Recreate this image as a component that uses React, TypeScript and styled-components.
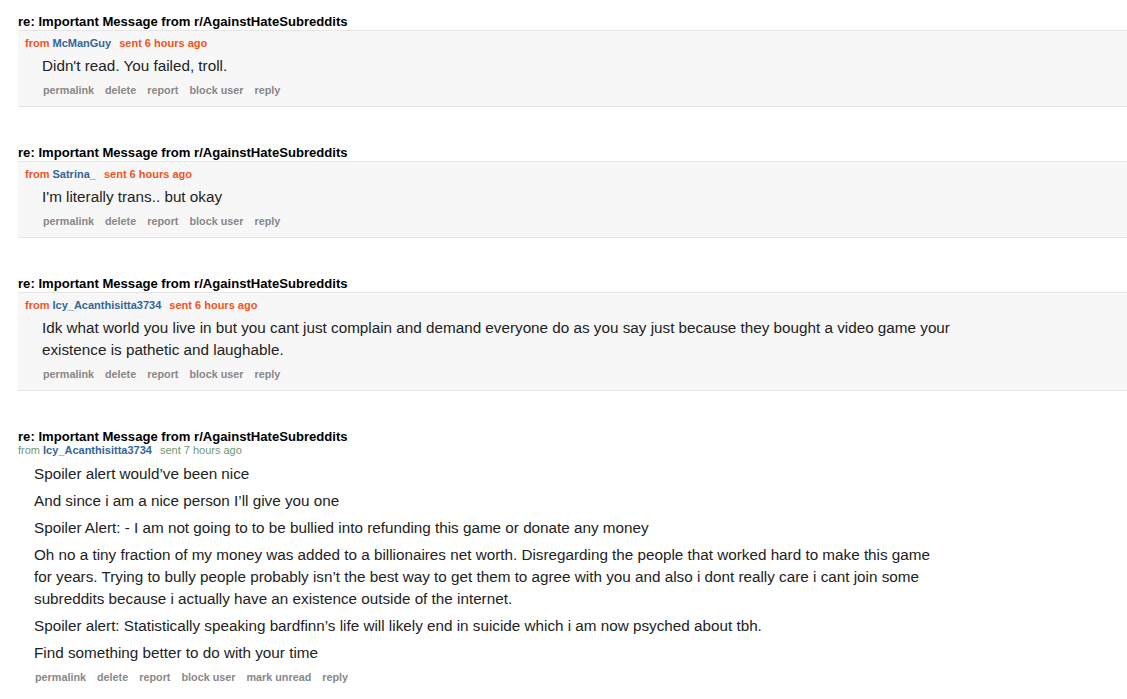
import React from 'react';
import styled, { createGlobalStyle } from 'styled-components';

const GlobalStyle = createGlobalStyle`
  html, body {
    margin: 0;
    padding: 0;
    background: #fff;
    overflow-x: hidden;
  }
  body {
    font-family: "Liberation Sans", Arial, sans-serif;
    font-size: 13px;
    color: #222;
  }
`;

type Msg = {
  author: string;
  sent: string;
  unread: boolean;
  paragraphs: string[];
};

const messages: Msg[] = [
  {
    author: 'McManGuy',
    sent: 'sent 6 hours ago',
    unread: true,
    paragraphs: ["Didn't read. You failed, troll."],
  },
  {
    author: 'Satrina_',
    sent: 'sent 6 hours ago',
    unread: true,
    paragraphs: ["I'm literally trans.. but okay"],
  },
  {
    author: 'Icy_Acanthisitta3734',
    sent: 'sent 6 hours ago',
    unread: true,
    paragraphs: [
      'Idk what world you live in but you cant just complain and demand everyone do as you say just because they bought a video game your existence is pathetic and laughable.',
    ],
  },
  {
    author: 'Icy_Acanthisitta3734',
    sent: 'sent 7 hours ago',
    unread: false,
    paragraphs: [
      'Spoiler alert would\u2019ve been nice',
      'And since i am a nice person I\u2019ll give you one',
      'Spoiler Alert: - I am not going to to be bullied into refunding this game or donate any money',
      'Oh no a tiny fraction of my money was added to a billionaires net worth. Disregarding the people that worked hard to make this game for years. Trying to bully people probably isn\u2019t the best way to get them to agree with you and also i dont really care i cant join some subreddits because i actually have an existence outside of the internet.',
      'Spoiler alert: Statistically speaking bardfinn\u2019s life will likely end in suicide which i am now psyched about tbh.',
      'Find something better to do with your time',
    ],
  },
];

const Page = styled.div`
  padding: 13.5px 0 0 18px;
  display: flex;
  flex-direction: column;
  gap: 37.5px;
`;

const Message = styled.div`
  display: flex;
  flex-direction: column;
`;

const Subject = styled.div`
  font-weight: bold;
  font-size: 13.1px;
  line-height: 15px;
  color: #000;
`;

const Entry = styled.div<{ $unread: boolean }>`
  background: ${p => (p.$unread ? '#f7f7f7' : 'transparent')};
  border-top: ${p => (p.$unread ? '1px solid #e5e5e5' : 'none')};
  border-bottom: ${p => (p.$unread ? '1px solid #e5e5e5' : 'none')};
  margin-top: ${p => (p.$unread ? '1px' : '0')};
  padding: ${p => (p.$unread ? '5px 0 8px 7px' : '0')};
  margin-right: -20px;
`;

const Tagline = styled.div<{ $unread: boolean }>`
  font-size: 11px;
  line-height: ${p => (p.$unread ? '14px' : '13px')};
  font-weight: ${p => (p.$unread ? 'bold' : 'normal')};
  color: ${p => (p.$unread ? '#f0541e' : '#6f9a6f')};
`;

const Author = styled.span`
  color: #369;
  font-weight: bold;
  margin-right: 8px;
`;

const Body = styled.div<{ $unread: boolean }>`
  padding-left: ${p => (p.$unread ? '17px' : '16px')};
  margin-top: ${p => (p.$unread ? '5px' : '6px')};
  font-size: 15.25px;
  line-height: 22px;
  color: #222;

  p {
    margin: 0 0 5px;
    max-width: 914px;
  }
`;

// the paragraph margin collapses into this one, so this is the whole gap
const Buttons = styled.ul<{ $unread: boolean }>`
  list-style: none;
  margin: 6.5px 0 0;
  padding: 0 0 0 ${p => (p.$unread ? '18px' : '17px')};
  display: flex;
  gap: 11px;
`;

const Button = styled.li`
  font-size: 10.8px;
  font-weight: bold;
  color: #888;
  line-height: 15px;
`;

const MessageItem: React.FC<{ msg: Msg }> = ({ msg }) => {
  const actions = msg.unread
    ? ['permalink', 'delete', 'report', 'block user', 'reply']
    : ['permalink', 'delete', 'report', 'block user', 'mark unread', 'reply'];
  return (
    <Message>
      <Subject>re: Important Message from r/AgainstHateSubreddits</Subject>
      <Entry $unread={msg.unread}>
        <Tagline $unread={msg.unread}>
          from <Author>{msg.author}</Author>
          {msg.sent}
        </Tagline>
        <Body $unread={msg.unread}>
          {msg.paragraphs.map((t, i) => (
            <p key={i}>{t}</p>
          ))}
        </Body>
        <Buttons $unread={msg.unread}>
          {actions.map(a => (
            <Button key={a}>{a}</Button>
          ))}
        </Buttons>
      </Entry>
    </Message>
  );
};

export default function App() {
  return (
    <>
      <GlobalStyle />
      <Page>
        {messages.map((m, i) => (
          <MessageItem key={i} msg={m} />
        ))}
      </Page>
    </>
  );
}
